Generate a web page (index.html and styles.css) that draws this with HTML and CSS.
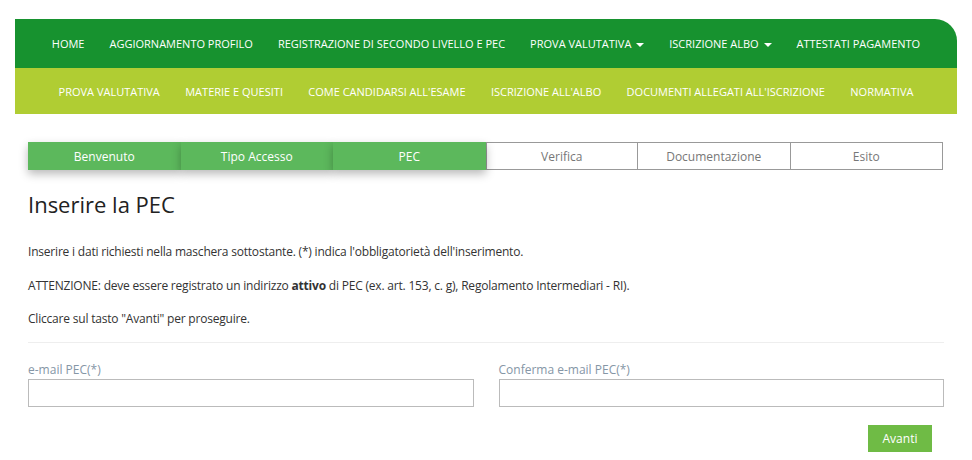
FILE: index.html
```html
<!DOCTYPE html>
<html lang="it">
<head>
<meta charset="utf-8">
<title>Inserire la PEC</title>
<link rel="stylesheet" href="styles.css">
</head>
<body>
<div class="page">
  <header class="nav">
    <ul class="nav-main">
      <li>HOME</li>
      <li>AGGIORNAMENTO PROFILO</li>
      <li>REGISTRAZIONE DI SECONDO LIVELLO E PEC</li>
      <li>PROVA VALUTATIVA <span class="caret"></span></li>
      <li>ISCRIZIONE ALBO <span class="caret"></span></li>
      <li>ATTESTATI PAGAMENTO</li>
    </ul>
    <ul class="nav-sub">
      <li>PROVA VALUTATIVA</li>
      <li>MATERIE E QUESITI</li>
      <li>COME CANDIDARSI ALL'ESAME</li>
      <li>ISCRIZIONE ALL'ALBO</li>
      <li>DOCUMENTI ALLEGATI ALL'ISCRIZIONE</li>
      <li>NORMATIVA</li>
    </ul>
  </header>

  <main class="content">
    <ol class="steps">
      <li class="step done">Benvenuto</li>
      <li class="step done">Tipo Accesso</li>
      <li class="step done">PEC</li>
      <li class="step">Verifica</li>
      <li class="step">Documentazione</li>
      <li class="step">Esito</li>
    </ol>

    <h1 class="title">Inserire la PEC</h1>
    <p class="text">Inserire i dati richiesti nella maschera sottostante. (*) indica l'obbligatorietà dell'inserimento.</p>
    <p class="text">ATTENZIONE: deve essere registrato un indirizzo <b>attivo</b> di PEC (ex. art. 153, c. g), Regolamento Intermediari - RI).</p>
    <p class="text">Cliccare sul tasto "Avanti" per proseguire.</p>
    <hr class="sep">

    <div class="fields">
      <label class="field">
        <span class="label">e-mail PEC(*)</span>
        <input class="input" type="text">
      </label>
      <label class="field">
        <span class="label">Conferma e-mail PEC(*)</span>
        <input class="input" type="text">
      </label>
    </div>
    <div class="actions">
      <button class="btn" type="button">Avanti</button>
    </div>
  </main>
</div>
</body>
</html>
```

FILE: styles.css
```css
* { box-sizing: border-box; }
html, body { margin: 0; padding: 0; background: #fff; }
body {
  font-family: "Open Sans", "Lato", sans-serif;
  color: #333;
  font-size: 12px;
}
.page {
  padding: 19px 15px 0 15px;
}
.nav {
  border-top-right-radius: 22px;
  overflow: hidden;
}
.nav ul {
  list-style: none;
  margin: 0;
  padding: 0;
  display: flex;
  justify-content: center;
  align-items: center;
  color: #fff;
  font-size: 11px;
}
.nav li { padding: 0 12.5px; white-space: nowrap; }
.nav-sub li { padding: 0 12.7px; }
.nav-main {
  background: #17922f;
  height: 49px;
}
.nav-sub {
  background: #b0cd33;
  height: 46px;
}
.caret {
  display: inline-block;
  width: 0; height: 0;
  border-left: 4px solid transparent;
  border-right: 4px solid transparent;
  border-top: 4px solid #fff;
  vertical-align: middle;
  margin-left: 2px;
}

.content {
  padding: 28px 13px 0 13px;
}
.steps {
  list-style: none;
  margin: 0 1px 0 0;
  padding: 0;
  display: grid;
  grid-template-columns: repeat(6, 1fr);
  height: 28px;
}
.step {
  display: flex;
  align-items: center;
  justify-content: center;
  font-size: 12px;
  color: #777;
  border: 1px solid #999;
  border-left: none;
  background: #fff;
}
.step.done {
  background: #5cb85c;
  color: #fff;
  border: none;
  box-shadow: 0 4px 10px rgba(0,0,0,0.28);
  position: relative;
}
.step:nth-child(4) { border-left: 1px solid #999; }

.title {
  font-size: 22px;
  font-weight: 400;
  color: #222;
  margin: 19px 0 0 0;
  line-height: 30px;
}
.text {
  margin: 26px 0 0 0;
  line-height: 13px;
  color: #333;
  letter-spacing: -0.2px;
}
.text + .text { margin-top: 21px; }
.text + .text + .text { margin-top: 20px; }
.sep {
  border: 0;
  border-top: 1px solid #eee;
  margin: 17px 0 0 0;
}
.fields {
  display: grid;
  grid-template-columns: 1fr 1fr;
  column-gap: 25px;
  margin-top: 20px;
}
.field { display: flex; flex-direction: column; }
.label {
  color: #8596a6;
  font-size: 12px;
  line-height: 14px;
  margin-bottom: 2px;
}
.input {
  height: 28px;
  border: 1px solid #bbb;
  border-radius: 0;
  font: inherit;
  padding: 4px 8px;
  width: 100%;
}
.actions {
  display: flex;
  justify-content: flex-end;
  padding-right: 12px;
  margin-top: 18px;
}
.btn {
  background: #6fbb45;
  color: #fff;
  border: none;
  border-radius: 0;
  height: 27px;
  width: 64px;
  font: inherit;
  font-size: 12px;
  padding: 0;
}
```
